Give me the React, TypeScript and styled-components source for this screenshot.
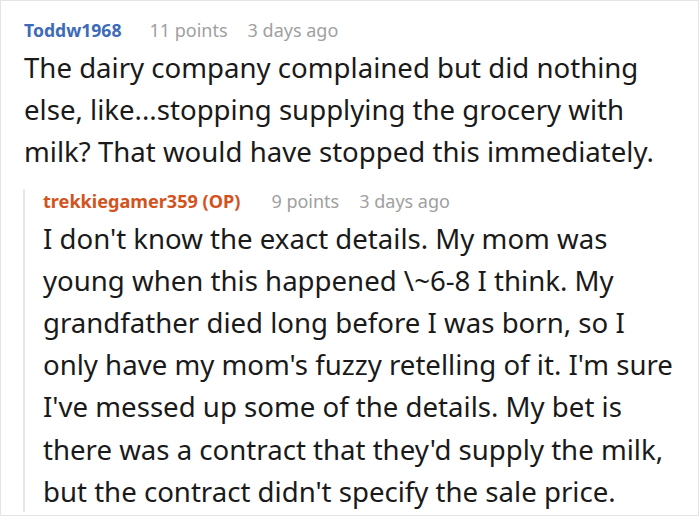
import React from "react";
import styled, { createGlobalStyle } from "styled-components";

const GlobalStyle = createGlobalStyle`
  html, body {
    margin: 0;
    padding: 0;
    background: #ffffff;
  }
  body {
    font-family: "Noto Sans", "Open Sans", sans-serif;
    color: #1a1a1a;
  }
`;

interface CommentData {
  author: string;
  isOp?: boolean;
  points: string;
  age: string;
  lines: string[];
  replies?: CommentData[];
}

const thread: CommentData = {
  author: "Toddw1968",
  points: "11 points",
  age: "3 days ago",
  lines: [
    "The dairy company complained but did nothing",
    "else, like...stopping supplying the grocery with",
    "milk? That would have stopped this immediately.",
  ],
  replies: [
    {
      author: "trekkiegamer359",
      isOp: true,
      points: "9 points",
      age: "3 days ago",
      lines: [
        "I don't know the exact details. My mom was",
        "young when this happened \\~6-8 I think. My",
        "grandfather died long before I was born, so I",
        "only have my mom's fuzzy retelling of it. I'm sure",
        "I've messed up some of the details. My bet is",
        "there was a contract that they'd supply the milk,",
        "but the contract didn't specify the sale price.",
      ],
    },
  ],
};

const Frame = styled.div`
  box-sizing: border-box;
  width: 699px;
  height: 516px;
  border: 1px solid #e4e4e4;
  padding: 17px 0 0 23px;
  overflow: hidden;
`;

const CommentBlock = styled.div`
  display: flex;
  flex-direction: column;
`;

const Meta = styled.div`
  display: flex;
  align-items: baseline;
  gap: 20px;
  font-size: 18px;
  line-height: 24px;
  color: #a0a0a0;
`;

const Author = styled.span<{ $op?: boolean }>`
  font-weight: 700;
  font-size: ${({ $op }) => ($op ? "18.1px" : "17.6px")};
  color: ${({ $op }) => ($op ? "#d2531e" : "#3d6bb8")};
  margin-right: ${({ $op }) => ($op ? "11px" : "8px")};
`;

const Body = styled.div`
  font-size: 27.6px;
  line-height: 42.2px;
  margin-top: 4px;
  white-space: nowrap;
`;

const Replies = styled.div`
  margin-top: 16px;
  margin-left: -1px;
  border-left: 2px solid #e6e6e6;
  padding-left: 18px;
`;

const Comment: React.FC<{ data: CommentData }> = ({ data }) => (
  <CommentBlock>
    <Meta>
      <Author $op={data.isOp}>
        {data.isOp ? `${data.author} (OP)` : data.author}
      </Author>
      <span>{data.points}</span>
      <span>{data.age}</span>
    </Meta>
    <Body>
      {data.lines.map((line) => (
        <div key={line}>{line}</div>
      ))}
    </Body>
    {data.replies && (
      <Replies>
        {data.replies.map((reply) => (
          <Comment key={reply.author} data={reply} />
        ))}
      </Replies>
    )}
  </CommentBlock>
);

const App: React.FC = () => (
  <>
    <GlobalStyle />
    <Frame>
      <Comment data={thread} />
    </Frame>
  </>
);

export default App;
